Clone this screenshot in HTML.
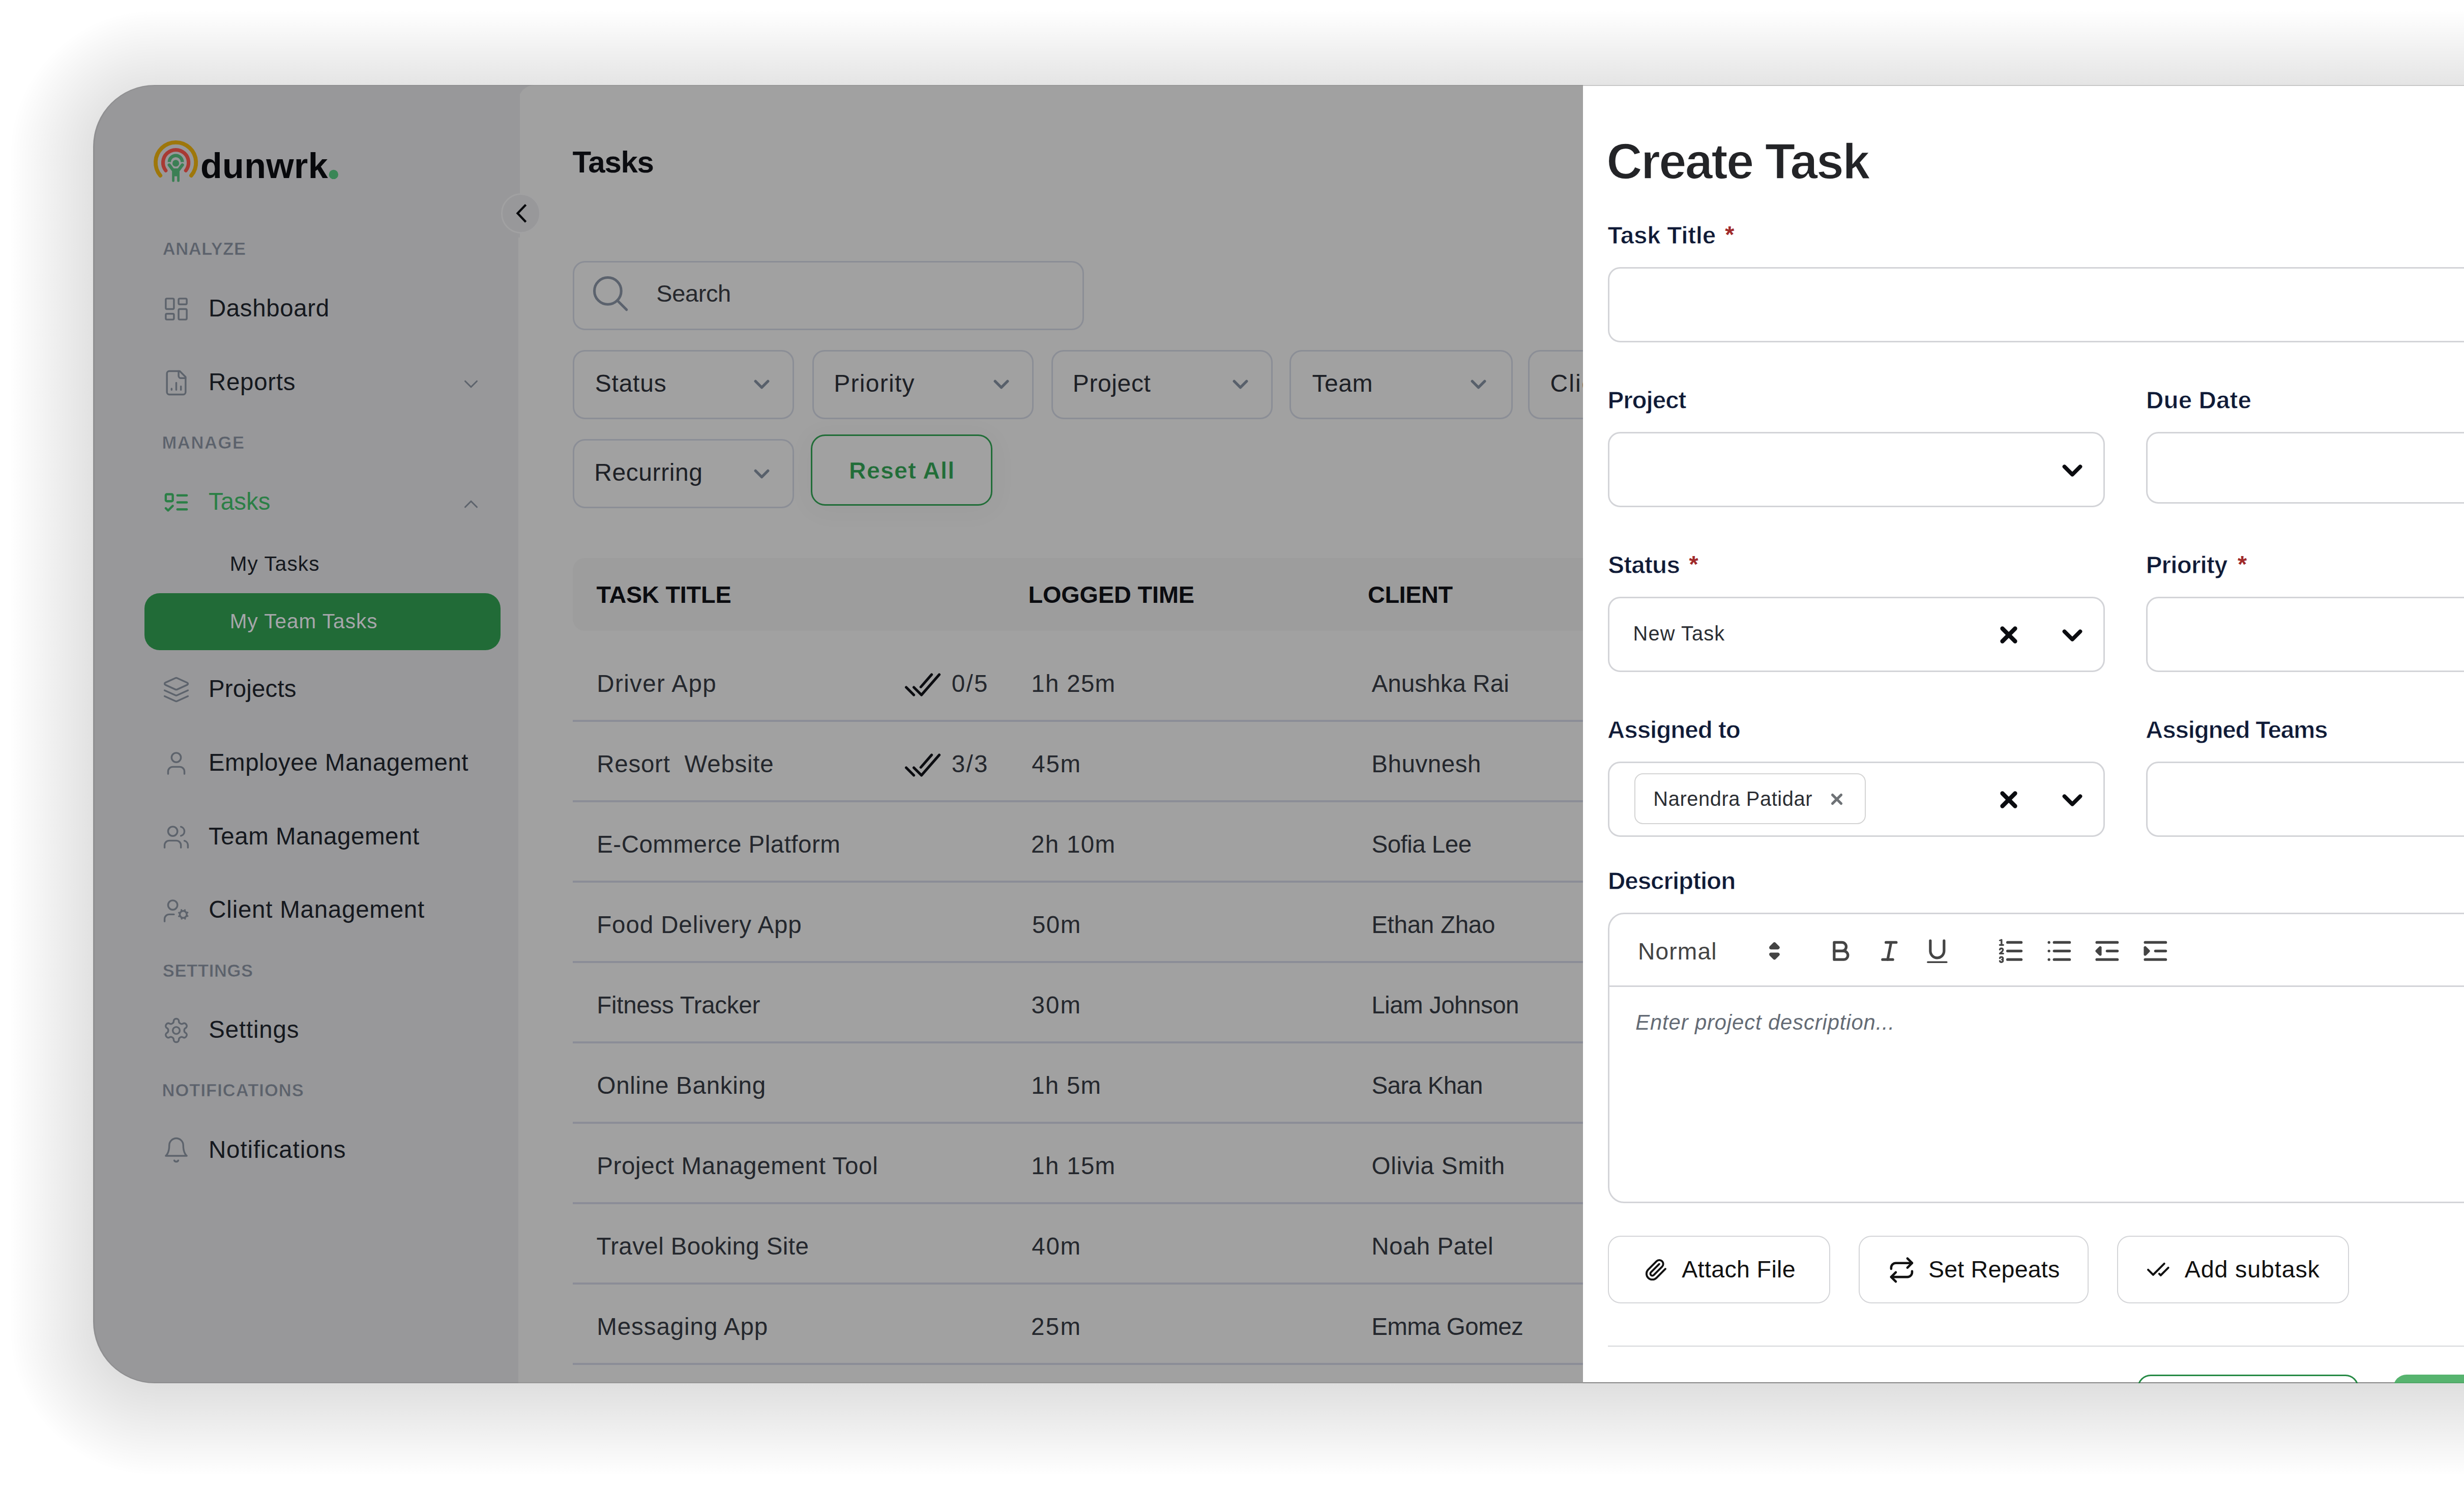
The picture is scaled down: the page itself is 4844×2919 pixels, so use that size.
<!DOCTYPE html><html lang="en"><head><meta charset="utf-8"><title>dunwrk - Create Task</title>
<style>
html,body{margin:0;padding:0;background:#fff;}
body{width:4844px;height:2919px;position:relative;overflow:hidden;font-family:"Liberation Sans",sans-serif;}
.b{position:absolute;box-sizing:border-box;}
.t{position:absolute;white-space:nowrap;line-height:1;}
.i{position:absolute;overflow:visible;}
#win{position:absolute;left:183px;top:166.5px;width:4900px;height:2552px;border-radius:121px 0 0 121px;background:#98989a;}
#clip{position:absolute;left:183px;top:166.5px;width:4661px;height:2552px;border-radius:121px 0 0 121px;overflow:hidden;}
#page{position:absolute;left:-183px;top:-166.5px;width:4844px;height:2919px;}
</style></head><body>
<div class="b " style="left:18.0px;top:304.5px;width:330.0px;height:2310.0px;background:linear-gradient(to right,rgba(0,0,0,0.0000),rgba(0,0,0,0.2300));"></div>
<div class="b " style="left:304.0px;top:18.5px;width:4540.0px;height:330.0px;background:linear-gradient(to bottom,rgba(0,0,0,0.0000),rgba(0,0,0,0.2300));"></div>
<div class="b " style="left:304.0px;top:2570.5px;width:4540.0px;height:330.0px;background:linear-gradient(to top,rgba(0,0,0,0.0000),rgba(0,0,0,0.2300));"></div>
<div class="b " style="left:18.0px;top:18.5px;width:286.0px;height:286.0px;background:radial-gradient(circle at 100% 100%,rgba(0,0,0,0.1993) 0px,rgba(0,0,0,0.1150) 121px,rgba(0,0,0,0.0000) 286px);"></div>
<div class="b " style="left:18.0px;top:2614.5px;width:286.0px;height:286.0px;background:radial-gradient(circle at 100% 0%,rgba(0,0,0,0.1993) 0px,rgba(0,0,0,0.1150) 121px,rgba(0,0,0,0.0000) 286px);"></div>
<div id="win"></div><div id="clip"><div id="page">
<div class="b " style="left:1019.2px;top:166.5px;width:2097.3px;height:2557.0px;background:#a1a1a1;border-radius:32px 0 0 0;"></div>
<svg class="i" style="left:290px;top:265px" width="400" height="110" viewBox="290 265 400 110" fill="none">
<path d="M315.2 345.1 A39.7 39.7 0 1 1 376 345.1" stroke="#9e770b" stroke-width="7.8" stroke-linecap="round"/>
<path d="M325.8 335.1 A25.1 25.1 0 1 1 365.4 335.1" stroke="#a83a33" stroke-width="7.2" stroke-linecap="round"/>
<path d="M332.8 318.6 A12.8 12.8 0 0 1 358.4 318.6" stroke="#3b7f54" stroke-width="6.4" stroke-linecap="butt"/>
<circle cx="345.6" cy="320.9" r="6.6" fill="#3b7f54"/>
<path d="M332.6 324.2 L340 334 M358.6 324.2 L351.2 334" stroke="#3b7f54" stroke-width="6.2" stroke-linecap="round"/>
<path d="M338.2 331 L353 331 L353 355 Q353 357.6 350.6 357.6 Q348.2 357.6 348.2 355 L348.2 346.5 L343 346.5 L343 355 Q343 357.6 340.6 357.6 Q338.2 357.6 338.2 355 Z" fill="#3b7f54"/>
<circle cx="655.8" cy="342.9" r="9.2" fill="#3a8656"/>
</svg>
<div class="t " style="left:394.0px;top:291.3px;font-size:70.0px;color:#08090c;font-weight:700;letter-spacing:0.34px;">dunwrk</div>
<div class="t " style="left:319.8px;top:472.4px;font-size:34.6px;color:#5b616b;font-weight:700;letter-spacing:0.51px;-webkit-text-stroke:0.6px #98989a;">ANALYZE</div>
<div class="t " style="left:409.9px;top:581.5px;font-size:47.5px;color:#15181e;letter-spacing:0.62px;">Dashboard</div>
<svg class="i" style="left:319.2px;top:580.1px" width="55.0" height="55.0" viewBox="0 0 24 24" fill="none" stroke="#5d636c" stroke-width="1.5" stroke-linecap="round" stroke-linejoin="round" ><rect width="7" height="9" x="3" y="3" rx="1"/><rect width="7" height="5" x="14" y="3" rx="1"/><rect width="7" height="9" x="14" y="12" rx="1"/><rect width="7" height="5" x="3" y="16" rx="1"/></svg>
<div class="t " style="left:409.9px;top:727.2px;font-size:47.5px;color:#15181e;letter-spacing:0.72px;">Reports</div>
<svg class="i" style="left:319.2px;top:724.5px" width="55.0" height="55.0" viewBox="0 0 24 24" fill="none" stroke="#5d636c" stroke-width="1.5" stroke-linecap="round" stroke-linejoin="round" ><path d="M15 2H6a2 2 0 0 0-2 2v16a2 2 0 0 0 2 2h12a2 2 0 0 0 2-2V7Z"/><path d="M14 2v4a2 2 0 0 0 2 2h4"/><path d="M8 18v-1"/><path d="M12 18v-6"/><path d="M16 18v-3"/></svg>
<svg class="i" style="left:902.5px;top:732.0px" width="46.0" height="46.0" viewBox="0 0 24 24" fill="none" stroke="#5d636c" stroke-width="1.6" stroke-linecap="round" stroke-linejoin="round" ><path d="m6 9 6 6 6-6"/></svg>
<div class="t " style="left:318.5px;top:853.0px;font-size:34.6px;color:#5b616b;font-weight:700;letter-spacing:1.57px;-webkit-text-stroke:0.6px #98989a;">MANAGE</div>
<div class="t " style="left:409.9px;top:961.8px;font-size:47.5px;color:#2b7f46;letter-spacing:0.04px;">Tasks</div>
<svg class="i" style="left:319.2px;top:959.8px" width="55.0" height="55.0" viewBox="0 0 24 24" fill="none" stroke="#2b7f46" stroke-width="1.9" stroke-linecap="round" stroke-linejoin="round" ><rect x="3" y="5" width="6" height="6" rx="1"/><path d="m3 17 2 2 4-4"/><path d="M13 6h8"/><path d="M13 12h8"/><path d="M13 18h8"/></svg>
<svg class="i" style="left:902.5px;top:968.0px" width="46.0" height="46.0" viewBox="0 0 24 24" fill="none" stroke="#5d636c" stroke-width="1.6" stroke-linecap="round" stroke-linejoin="round" ><path d="m18 15-6-6-6 6"/></svg>
<div class="t " style="left:451.8px;top:1088.3px;font-size:40.5px;color:#15181e;letter-spacing:1.08px;">My Tasks</div>
<div class="b " style="left:283.5px;top:1165.5px;width:700.3px;height:112.1px;background:#216b37;border-radius:30px;"></div>
<div class="t " style="left:451.8px;top:1200.7px;font-size:40.5px;color:#a6a6aa;letter-spacing:1.00px;">My Team Tasks</div>
<div class="t " style="left:409.9px;top:1329.5px;font-size:47.5px;color:#15181e;letter-spacing:0.15px;">Projects</div>
<svg class="i" style="left:319.2px;top:1327.5px" width="55.0" height="55.0" viewBox="0 0 24 24" fill="none" stroke="#5d636c" stroke-width="1.5" stroke-linecap="round" stroke-linejoin="round" ><path d="m12.83 2.18a2 2 0 0 0-1.66 0L2.6 6.08a1 1 0 0 0 0 1.83l8.58 3.91a2 2 0 0 0 1.66 0l8.58-3.9a1 1 0 0 0 0-1.83Z"/><path d="m22 17.65-9.17 4.16a2 2 0 0 1-1.66 0L2 17.65"/><path d="m22 12.65-9.17 4.16a2 2 0 0 1-1.66 0L2 12.65"/></svg>
<div class="t " style="left:409.9px;top:1474.5px;font-size:47.5px;color:#15181e;letter-spacing:0.50px;">Employee Management</div>
<svg class="i" style="left:319.2px;top:1473.0px" width="55.0" height="55.0" viewBox="0 0 24 24" fill="none" stroke="#5d636c" stroke-width="1.5" stroke-linecap="round" stroke-linejoin="round" ><path d="M19 21v-2a4 4 0 0 0-4-4H9a4 4 0 0 0-4 4v2"/><circle cx="12" cy="7" r="4"/></svg>
<div class="t " style="left:409.9px;top:1619.5px;font-size:47.5px;color:#15181e;letter-spacing:0.55px;">Team Management</div>
<svg class="i" style="left:319.2px;top:1618.0px" width="55.0" height="55.0" viewBox="0 0 24 24" fill="none" stroke="#5d636c" stroke-width="1.5" stroke-linecap="round" stroke-linejoin="round" ><path d="M16 21v-2a4 4 0 0 0-4-4H6a4 4 0 0 0-4 4v2"/><circle cx="9" cy="7" r="4"/><path d="M22 21v-2a4 4 0 0 0-3-3.87"/><path d="M16 3.13a4 4 0 0 1 0 7.75"/></svg>
<div class="t " style="left:410.3px;top:1764.3px;font-size:47.5px;color:#15181e;letter-spacing:0.75px;">Client Management</div>
<svg class="i" style="left:319.2px;top:1762.5px" width="55.0" height="55.0" viewBox="0 0 24 24" fill="none" stroke="#5d636c" stroke-width="1.5" stroke-linecap="round" stroke-linejoin="round" ><circle cx="18" cy="15" r="3"/><circle cx="9" cy="7" r="4"/><path d="M10 15H6a4 4 0 0 0-4 4v2"/><path d="m21.7 16.4-.9-.3"/><path d="m15.2 13.9-.9-.3"/><path d="m16.6 18.7.3-.9"/><path d="m19.1 12.2.3-.9"/><path d="m19.6 18.7-.4-1"/><path d="m16.8 12.3-.4-1"/><path d="m14.3 16.6 1-.4"/><path d="m20.7 13.8 1-.4"/></svg>
<div class="t " style="left:319.7px;top:1891.0px;font-size:34.6px;color:#5b616b;font-weight:700;letter-spacing:0.65px;-webkit-text-stroke:0.6px #98989a;">SETTINGS</div>
<div class="t " style="left:410.2px;top:2000.2px;font-size:47.5px;color:#15181e;letter-spacing:0.82px;">Settings</div>
<svg class="i" style="left:319.2px;top:1997.5px" width="55.0" height="55.0" viewBox="0 0 24 24" fill="none" stroke="#5d636c" stroke-width="1.5" stroke-linecap="round" stroke-linejoin="round" ><path d="M12.22 2h-.44a2 2 0 0 0-2 2v.18a2 2 0 0 1-1 1.73l-.43.25a2 2 0 0 1-2 0l-.15-.08a2 2 0 0 0-2.73.73l-.22.38a2 2 0 0 0 .73 2.73l.15.1a2 2 0 0 1 1 1.72v.51a2 2 0 0 1-1 1.74l-.15.09a2 2 0 0 0-.73 2.73l.22.38a2 2 0 0 0 2.73.73l.15-.08a2 2 0 0 1 2 0l.43.25a2 2 0 0 1 1 1.73V20a2 2 0 0 0 2 2h.44a2 2 0 0 0 2-2v-.18a2 2 0 0 1 1-1.73l.43-.25a2 2 0 0 1 2 0l.15.08a2 2 0 0 0 2.73-.73l.22-.39a2 2 0 0 0-.73-2.73l-.15-.08a2 2 0 0 1-1-1.74v-.5a2 2 0 0 1 1-1.74l.15-.09a2 2 0 0 0 .73-2.73l-.22-.38a2 2 0 0 0-2.73-.73l-.15.08a2 2 0 0 1-2 0l-.43-.25a2 2 0 0 1-1-1.73V4a2 2 0 0 0-2-2z"/><circle cx="12" cy="12" r="3"/></svg>
<div class="t " style="left:318.5px;top:2126.0px;font-size:34.6px;color:#5b616b;font-weight:700;letter-spacing:1.00px;-webkit-text-stroke:0.6px #98989a;">NOTIFICATIONS</div>
<div class="t " style="left:409.9px;top:2235.5px;font-size:47.5px;color:#15181e;letter-spacing:0.91px;">Notifications</div>
<svg class="i" style="left:319.2px;top:2232.5px" width="55.0" height="55.0" viewBox="0 0 24 24" fill="none" stroke="#5d636c" stroke-width="1.5" stroke-linecap="round" stroke-linejoin="round" ><path d="M6 8a6 6 0 0 1 12 0c0 7 3 9 3 9H3s3-2 3-9"/><path d="M10.3 21a1.94 1.94 0 0 0 3.4 0"/></svg>
<div class="b " style="left:1019.0px;top:166.5px;width:2.9px;height:300.5px;background:#98989a;"></div>
<div class="b " style="left:984.7px;top:379.9px;width:78.8px;height:78.8px;background:#98989a;border:3.8px solid #a1a1a2;border-radius:50%;"></div>
<svg class="i" style="left:1000px;top:395px" width="50" height="50" viewBox="1000 395 50 50" fill="none" stroke="#08090c" stroke-width="4.4" stroke-linecap="square" stroke-linejoin="miter"><polyline points="1032.2,404 1017.6,419.3 1032.2,434.6"/></svg>
<div class="t " style="left:1125.4px;top:289.2px;font-size:60.0px;color:#0b0c10;font-weight:700;letter-spacing:-1.29px;">Tasks</div>
<div class="b " style="left:1125.6px;top:512.5px;width:1005.4px;height:136.3px;border:3.3px solid #8b8e96;border-radius:24px;"></div>
<svg class="i" style="left:1158.1px;top:534.5px" width="84.3" height="84.3" viewBox="0 0 24 24" fill="none" stroke="#5b626d" stroke-width="1.45" stroke-linecap="round" stroke-linejoin="round" ><circle cx="10.5" cy="10.5" r="7.5"/><path d="m21 21-5.2-5.2"/></svg>
<div class="t " style="left:1290.3px;top:552.5px;font-size:47.0px;color:#26282d;letter-spacing:-0.42px;">Search</div>
<div class="b " style="left:1126.0px;top:688.0px;width:434.5px;height:135.5px;border:3px solid #8b8e96;border-radius:24px;"></div>
<div class="t " style="left:1169.8px;top:729.6px;font-size:48.0px;color:#1d2026;letter-spacing:0.75px;">Status</div>
<svg class="i" style="left:1473.0px;top:731.3px" width="49.0" height="49.0" viewBox="0 0 24 24" fill="none" stroke="#58606b" stroke-width="2.6" stroke-linecap="round" stroke-linejoin="round" ><path d="m6 9 6 6 6-6"/></svg>
<div class="b " style="left:1597.0px;top:688.0px;width:434.5px;height:135.5px;border:3px solid #8b8e96;border-radius:24px;"></div>
<div class="t " style="left:1639.2px;top:729.6px;font-size:48.0px;color:#1d2026;letter-spacing:1.28px;">Priority</div>
<svg class="i" style="left:1944.0px;top:731.3px" width="49.0" height="49.0" viewBox="0 0 24 24" fill="none" stroke="#58606b" stroke-width="2.6" stroke-linecap="round" stroke-linejoin="round" ><path d="m6 9 6 6 6-6"/></svg>
<div class="b " style="left:2066.6px;top:688.0px;width:435.6px;height:135.5px;border:3px solid #8b8e96;border-radius:24px;"></div>
<div class="t " style="left:2108.8px;top:729.6px;font-size:48.0px;color:#1d2026;letter-spacing:0.61px;">Project</div>
<svg class="i" style="left:2413.6px;top:731.3px" width="49.0" height="49.0" viewBox="0 0 24 24" fill="none" stroke="#58606b" stroke-width="2.6" stroke-linecap="round" stroke-linejoin="round" ><path d="m6 9 6 6 6-6"/></svg>
<div class="b " style="left:2534.5px;top:688.0px;width:439.0px;height:135.5px;border:3px solid #8b8e96;border-radius:24px;"></div>
<div class="t " style="left:2579.5px;top:729.6px;font-size:48.0px;color:#1d2026;letter-spacing:0.51px;">Team</div>
<svg class="i" style="left:2881.5px;top:731.3px" width="49.0" height="49.0" viewBox="0 0 24 24" fill="none" stroke="#58606b" stroke-width="2.6" stroke-linecap="round" stroke-linejoin="round" ><path d="m6 9 6 6 6-6"/></svg>
<div class="b " style="left:3004.0px;top:688.0px;width:439.0px;height:135.5px;border:3px solid #8b8e96;border-radius:24px;"></div>
<div class="t " style="left:3047.6px;top:729.6px;font-size:48.0px;color:#1d2026;letter-spacing:1.98px;">Client</div>
<svg class="i" style="left:3351.0px;top:731.3px" width="49.0" height="49.0" viewBox="0 0 24 24" fill="none" stroke="#58606b" stroke-width="2.6" stroke-linecap="round" stroke-linejoin="round" ><path d="m6 9 6 6 6-6"/></svg>
<div class="b " style="left:1126.0px;top:863.4px;width:434.5px;height:135.5px;border:3px solid #8b8e96;border-radius:24px;"></div>
<div class="t " style="left:1168.2px;top:905.0px;font-size:48.0px;color:#1d2026;letter-spacing:0.59px;">Recurring</div>
<svg class="i" style="left:1473.0px;top:906.7px" width="49.0" height="49.0" viewBox="0 0 24 24" fill="none" stroke="#58606b" stroke-width="2.6" stroke-linecap="round" stroke-linejoin="round" ><path d="m6 9 6 6 6-6"/></svg>
<div class="b " style="left:1593.9px;top:853.6px;width:357.5px;height:140.7px;border:3.6px solid #216d38;border-radius:28px;box-shadow:0 6px 50px 8px rgba(0,0,0,0.03);"></div>
<div class="t " style="left:1669.1px;top:901.6px;font-size:46.6px;color:#216d38;font-weight:700;letter-spacing:1.17px;-webkit-text-stroke:0.5px #a1a1a1;">Reset All</div>
<div class="b " style="left:1125.6px;top:1096.5px;width:2025.9px;height:143.0px;background:#9d9d9d;border-radius:24px;"></div>
<div class="t " style="left:1172.5px;top:1145.8px;font-size:46.8px;color:#0b0c10;font-weight:700;letter-spacing:-0.20px;">TASK TITLE</div>
<div class="t " style="left:2021.5px;top:1145.8px;font-size:46.8px;color:#0b0c10;font-weight:700;letter-spacing:-0.10px;">LOGGED TIME</div>
<div class="t " style="left:2689.0px;top:1145.8px;font-size:46.8px;color:#0b0c10;font-weight:700;letter-spacing:-0.39px;">CLIENT</div>
<div class="t " style="left:1173.2px;top:1320.3px;font-size:47.5px;color:#24272d;letter-spacing:1.41px;">Driver App</div>
<svg class="i" style="left:1774.4px;top:1306.0px" width="80" height="80" viewBox="0 0 512 512" fill="none" stroke="#0b0c10" stroke-width="33" stroke-linecap="round" stroke-linejoin="round"><path d="M464 128L240 384l-96-96M144 384l-96-96M368 128L232 284"/></svg>
<div class="t " style="left:1870.7px;top:1320.3px;font-size:47.5px;color:#24272d;letter-spacing:2.33px;">0/5</div>
<div class="t " style="left:2027.2px;top:1320.3px;font-size:47.5px;color:#24272d;letter-spacing:1.31px;">1h 25m</div>
<div class="t " style="left:2696.5px;top:1320.3px;font-size:47.5px;color:#24272d;letter-spacing:0.09px;">Anushka Rai</div>
<div class="b " style="left:1126.0px;top:1415.4px;width:1990.5px;height:3.6px;background:#8b8d97;"></div>
<div class="t " style="left:1173.2px;top:1478.3px;font-size:47.5px;color:#24272d;letter-spacing:0.75px;">Resort &nbsp;Website</div>
<svg class="i" style="left:1774.4px;top:1464.0px" width="80" height="80" viewBox="0 0 512 512" fill="none" stroke="#0b0c10" stroke-width="33" stroke-linecap="round" stroke-linejoin="round"><path d="M464 128L240 384l-96-96M144 384l-96-96M368 128L232 284"/></svg>
<div class="t " style="left:1870.7px;top:1478.3px;font-size:47.5px;color:#24272d;letter-spacing:2.39px;">3/3</div>
<div class="t " style="left:2028.2px;top:1478.3px;font-size:47.5px;color:#24272d;letter-spacing:1.78px;">45m</div>
<div class="t " style="left:2696.2px;top:1478.3px;font-size:47.5px;color:#24272d;letter-spacing:0.57px;">Bhuvnesh</div>
<div class="b " style="left:1126.0px;top:1573.4px;width:1990.5px;height:3.6px;background:#8b8d97;"></div>
<div class="t " style="left:1173.2px;top:1636.3px;font-size:47.5px;color:#24272d;letter-spacing:0.49px;">E-Commerce Platform</div>
<div class="t " style="left:2026.9px;top:1636.3px;font-size:47.5px;color:#24272d;letter-spacing:1.37px;">2h 10m</div>
<div class="t " style="left:2696.5px;top:1636.3px;font-size:47.5px;color:#24272d;letter-spacing:-0.52px;">Sofia Lee</div>
<div class="b " style="left:1126.0px;top:1731.4px;width:1990.5px;height:3.6px;background:#8b8d97;"></div>
<div class="t " style="left:1173.2px;top:1794.3px;font-size:47.5px;color:#24272d;letter-spacing:0.90px;">Food Delivery App</div>
<div class="t " style="left:2028.9px;top:1794.3px;font-size:47.5px;color:#24272d;letter-spacing:1.45px;">50m</div>
<div class="t " style="left:2696.2px;top:1794.3px;font-size:47.5px;color:#24272d;letter-spacing:-0.26px;">Ethan Zhao</div>
<div class="b " style="left:1126.0px;top:1889.4px;width:1990.5px;height:3.6px;background:#8b8d97;"></div>
<div class="t " style="left:1173.2px;top:1952.3px;font-size:47.5px;color:#24272d;letter-spacing:-0.25px;">Fitness Tracker</div>
<div class="t " style="left:2027.5px;top:1952.3px;font-size:47.5px;color:#24272d;letter-spacing:2.14px;">30m</div>
<div class="t " style="left:2696.2px;top:1952.3px;font-size:47.5px;color:#24272d;letter-spacing:-0.49px;">Liam Johnson</div>
<div class="b " style="left:1126.0px;top:2047.4px;width:1990.5px;height:3.6px;background:#8b8d97;"></div>
<div class="t " style="left:1173.5px;top:2110.3px;font-size:47.5px;color:#24272d;letter-spacing:0.73px;">Online Banking</div>
<div class="t " style="left:2027.2px;top:2110.3px;font-size:47.5px;color:#24272d;letter-spacing:1.22px;">1h 5m</div>
<div class="t " style="left:2696.5px;top:2110.3px;font-size:47.5px;color:#24272d;letter-spacing:-0.68px;">Sara Khan</div>
<div class="b " style="left:1126.0px;top:2205.4px;width:1990.5px;height:3.6px;background:#8b8d97;"></div>
<div class="t " style="left:1173.2px;top:2268.3px;font-size:47.5px;color:#24272d;letter-spacing:0.67px;">Project Management Tool</div>
<div class="t " style="left:2027.2px;top:2268.3px;font-size:47.5px;color:#24272d;letter-spacing:1.31px;">1h 15m</div>
<div class="t " style="left:2696.5px;top:2268.3px;font-size:47.5px;color:#24272d;letter-spacing:0.75px;">Olivia Smith</div>
<div class="b " style="left:1126.0px;top:2363.4px;width:1990.5px;height:3.6px;background:#8b8d97;"></div>
<div class="t " style="left:1172.5px;top:2426.3px;font-size:47.5px;color:#24272d;letter-spacing:0.40px;">Travel Booking Site</div>
<div class="t " style="left:2028.2px;top:2426.3px;font-size:47.5px;color:#24272d;letter-spacing:1.78px;">40m</div>
<div class="t " style="left:2696.2px;top:2426.3px;font-size:47.5px;color:#24272d;letter-spacing:0.49px;">Noah Patel</div>
<div class="b " style="left:1126.0px;top:2521.4px;width:1990.5px;height:3.6px;background:#8b8d97;"></div>
<div class="t " style="left:1173.2px;top:2584.3px;font-size:47.5px;color:#24272d;letter-spacing:0.93px;">Messaging App</div>
<div class="t " style="left:2026.9px;top:2584.3px;font-size:47.5px;color:#24272d;letter-spacing:2.44px;">25m</div>
<div class="t " style="left:2696.2px;top:2584.3px;font-size:47.5px;color:#24272d;letter-spacing:-0.55px;">Emma Gomez</div>
<div class="b " style="left:1126.0px;top:2679.4px;width:1990.5px;height:3.6px;background:#8b8d97;"></div>
<div class="b " style="left:3111.5px;top:166.5px;width:1788.5px;height:2552.0px;background:#fff;border-top:2px solid #d2d2d2;border-bottom:2.5px solid #919191;"></div>
<div class="t " style="left:3158.3px;top:268.8px;font-size:97.5px;color:#232427;font-weight:700;letter-spacing:-2.73px;-webkit-text-stroke:1.6px #fff;">Create Task</div>
<div class="t " style="left:3160.6px;top:438.7px;font-size:47.6px;color:#0f1a36;font-weight:700;letter-spacing:-0.28px;-webkit-text-stroke:0.8px #fff;">Task Title</div>
<div class="t " style="left:3391.2px;top:438.2px;font-size:46.5px;color:#a02a2a;font-weight:700;">*</div>
<div class="b " style="left:3160.7px;top:524.5px;width:1739.3px;height:148.1px;border:3.2px solid #d3d4d8;border-radius:24px;background:#fff;"></div>
<div class="t " style="left:3160.5px;top:762.6px;font-size:47.6px;color:#0f1a36;font-weight:700;letter-spacing:-1.08px;-webkit-text-stroke:0.8px #fff;">Project</div>
<div class="b " style="left:3160.7px;top:848.5px;width:977.0px;height:148.1px;border:3.2px solid #d3d4d8;border-radius:24px;background:#fff;"></div>
<svg class="i" style="left:4042.6px;top:893.7px" width="62.0" height="62.0" viewBox="0 0 24 24" fill="none" stroke="#0b0c10" stroke-width="3" stroke-linecap="round" stroke-linejoin="round" ><path d="m6 9 6 6 6-6"/></svg>
<div class="t " style="left:4219.1px;top:762.6px;font-size:47.6px;color:#0f1a36;font-weight:700;letter-spacing:0.09px;-webkit-text-stroke:0.8px #fff;">Due Date</div>
<div class="b " style="left:4219.2px;top:848.5px;width:680.8px;height:141.4px;border:3.2px solid #d3d4d8;border-radius:24px;background:#fff;"></div>
<div class="t " style="left:3161.3px;top:1086.8px;font-size:47.6px;color:#0f1a36;font-weight:700;letter-spacing:-0.78px;-webkit-text-stroke:0.8px #fff;">Status</div>
<div class="t " style="left:3320.5px;top:1086.3px;font-size:46.5px;color:#a02a2a;font-weight:700;">*</div>
<div class="b " style="left:3160.7px;top:1172.7px;width:977.0px;height:148.3px;border:3.2px solid #d3d4d8;border-radius:24px;background:#fff;"></div>
<svg class="i" style="left:4042.6px;top:1217.9px" width="62.0" height="62.0" viewBox="0 0 24 24" fill="none" stroke="#0b0c10" stroke-width="3" stroke-linecap="round" stroke-linejoin="round" ><path d="m6 9 6 6 6-6"/></svg>
<svg class="i" style="left:3924.0px;top:1222.7px" width="50.0" height="50.0" viewBox="0 0 24 24" fill="none" stroke="#0b0c10" stroke-width="4" stroke-linecap="round" stroke-linejoin="round" ><path d="M18 6 6 18"/><path d="m6 6 12 12"/></svg>
<div class="t " style="left:3210.6px;top:1226.4px;font-size:39.8px;color:#2b2e33;letter-spacing:1.12px;">New Task</div>
<div class="t " style="left:4218.7px;top:1086.8px;font-size:47.6px;color:#0f1a36;font-weight:700;letter-spacing:-0.83px;-webkit-text-stroke:0.8px #fff;">Priority</div>
<div class="t " style="left:4398.9px;top:1086.3px;font-size:46.5px;color:#a02a2a;font-weight:700;">*</div>
<div class="b " style="left:4219.2px;top:1172.7px;width:680.8px;height:148.3px;border:3.2px solid #d3d4d8;border-radius:24px;background:#fff;"></div>
<div class="t " style="left:3159.9px;top:1411.0px;font-size:47.6px;color:#0f1a36;font-weight:700;letter-spacing:-1.05px;-webkit-text-stroke:0.8px #fff;">Assigned to</div>
<div class="b " style="left:3160.7px;top:1496.9px;width:977.0px;height:148.3px;border:3.2px solid #d3d4d8;border-radius:24px;background:#fff;"></div>
<svg class="i" style="left:4042.6px;top:1542.1px" width="62.0" height="62.0" viewBox="0 0 24 24" fill="none" stroke="#0b0c10" stroke-width="3" stroke-linecap="round" stroke-linejoin="round" ><path d="m6 9 6 6 6-6"/></svg>
<svg class="i" style="left:3924.0px;top:1546.9px" width="50.0" height="50.0" viewBox="0 0 24 24" fill="none" stroke="#0b0c10" stroke-width="4" stroke-linecap="round" stroke-linejoin="round" ><path d="M18 6 6 18"/><path d="m6 6 12 12"/></svg>
<div class="b " style="left:3212.5px;top:1520.3px;width:455.7px;height:100.0px;border:2.7px solid #d4d4d4;border-radius:17px;"></div>
<div class="t " style="left:3250.3px;top:1550.9px;font-size:39.8px;color:#2b2e33;letter-spacing:0.61px;">Narendra Patidar</div>
<svg class="i" style="left:3594.3px;top:1554.0px" width="34.0" height="34.0" viewBox="0 0 24 24" fill="none" stroke="#6e7276" stroke-width="3.7" stroke-linecap="round" stroke-linejoin="round" ><path d="M18 6 6 18"/><path d="m6 6 12 12"/></svg>
<div class="t " style="left:4218.1px;top:1411.0px;font-size:47.6px;color:#0f1a36;font-weight:700;letter-spacing:-1.25px;-webkit-text-stroke:0.8px #fff;">Assigned Teams</div>
<div class="b " style="left:4219.2px;top:1496.9px;width:680.8px;height:148.3px;border:3.2px solid #d3d4d8;border-radius:24px;background:#fff;"></div>
<div class="t " style="left:3160.9px;top:1708.3px;font-size:47.6px;color:#0f1a36;font-weight:700;letter-spacing:-1.05px;-webkit-text-stroke:0.8px #fff;">Description</div>
<div class="b " style="left:3160.7px;top:1793.6px;width:1739.3px;height:571.3px;border:3.2px solid #d3d4d8;border-radius:32px;background:#fff;"></div>
<div class="b " style="left:3161.7px;top:1936.7px;width:1738.3px;height:3.0px;background:#d3d4d8;"></div>
<div class="t " style="left:3219.9px;top:1847.3px;font-size:46.2px;color:#444;letter-spacing:1.16px;">Normal</div>
<svg class="i" style="left:3457.6px;top:1839.4px" width="60.7" height="60.7" viewBox="0 0 18 18" fill="none" stroke="#444" stroke-width="1.55" stroke-linecap="round" stroke-linejoin="round"><polygon points="7 11 9 13 11 11 7 11" fill="#444" stroke-width="2.1"/><polygon points="7 7 9 5 11 7 7 7" fill="#444" stroke-width="2.1"/></svg>
<svg class="i" style="left:3589.2px;top:1839.0px" width="60.7" height="60.7" viewBox="0 0 18 18" fill="none" stroke="#444" stroke-width="1.55" stroke-linecap="round" stroke-linejoin="round"><path d="M5,4H9.5A2.5,2.5,0,0,1,12,6.5v0A2.5,2.5,0,0,1,9.5,9H5A0,0,0,0,1,5,9V4A0,0,0,0,1,5,4Z"/><path d="M5,9h5.5A2.5,2.5,0,0,1,13,11.5v0A2.5,2.5,0,0,1,10.5,14H5a0,0,0,0,1,0,0V9A0,0,0,0,1,5,9Z"/></svg>
<svg class="i" style="left:3683.7px;top:1839.0px" width="60.7" height="60.7" viewBox="0 0 18 18" fill="none" stroke="#444" stroke-width="1.55" stroke-linecap="round" stroke-linejoin="round"><line x1="7" x2="13" y1="4" y2="4"/><line x1="5" x2="11" y1="14" y2="14"/><line x1="8" x2="10" y1="14" y2="4"/></svg>
<svg class="i" style="left:3778.2px;top:1839.0px" width="60.7" height="60.7" viewBox="0 0 18 18" fill="none" stroke="#444" stroke-width="1.55" stroke-linecap="round" stroke-linejoin="round"><path d="M5,3V9a4.012,4.012,0,0,0,4,4H9a4.012,4.012,0,0,0,4-4V3"/><rect fill="#444" stroke="none" height="1" rx="0.5" ry="0.5" width="12" x="3" y="15"/></svg>
<svg class="i" style="left:3923.2px;top:1839.0px" width="60.7" height="60.7" viewBox="0 0 18 18" fill="none" stroke="#444" stroke-width="1.55" stroke-linecap="round" stroke-linejoin="round"><line x1="7" x2="15" y1="4" y2="4"/><line x1="7" x2="15" y1="9" y2="9"/><line x1="7" x2="15" y1="14" y2="14"/><line x1="2.5" x2="4.5" y1="5.5" y2="5.5" stroke-width="1"/><path fill="#444" stroke="none" d="M3.5,6A0.5,0.5,0,0,1,3,5.5V3.085l-0.276.138A0.5,0.5,0,0,1,2.053,3c-0.124-.247-0.023-0.324.224-0.447l1-.5A0.5,0.5,0,0,1,4,2.5v3A0.5,0.5,0,0,1,3.5,6Z"/><path stroke-width="1" d="M4.5,10.5h-2c0-.234,1.85-1.076,1.85-2.234A0.959,0.959,0,0,0,2.5,8.156"/><path stroke-width="1" d="M2.5,14.846a0.959,0.959,0,0,0,1.85-.109A0.7,0.7,0,0,0,3.75,14a0.688,0.688,0,0,0,.6-0.736,0.959,0.959,0,0,0-1.85-.109"/></svg>
<svg class="i" style="left:4017.7px;top:1839.0px" width="60.7" height="60.7" viewBox="0 0 18 18" fill="none" stroke="#444" stroke-width="1.55" stroke-linecap="round" stroke-linejoin="round"><line x1="6" x2="15" y1="4" y2="4"/><line x1="6" x2="15" y1="9" y2="9"/><line x1="6" x2="15" y1="14" y2="14"/><line x1="3" x2="3" y1="4" y2="4"/><line x1="3" x2="3" y1="9" y2="9"/><line x1="3" x2="3" y1="14" y2="14"/></svg>
<svg class="i" style="left:4112.2px;top:1839.0px" width="60.7" height="60.7" viewBox="0 0 18 18" fill="none" stroke="#444" stroke-width="1.55" stroke-linecap="round" stroke-linejoin="round"><line x1="3" x2="15" y1="14" y2="14"/><line x1="3" x2="15" y1="4" y2="4"/><line x1="9" x2="15" y1="9" y2="9"/><polyline fill="#444" stroke-width="1.6" points="5 7 5 11 3 9 5 7"/></svg>
<svg class="i" style="left:4206.7px;top:1839.0px" width="60.7" height="60.7" viewBox="0 0 18 18" fill="none" stroke="#444" stroke-width="1.55" stroke-linecap="round" stroke-linejoin="round"><line x1="3" x2="15" y1="14" y2="14"/><line x1="3" x2="15" y1="4" y2="4"/><line x1="9" x2="15" y1="9" y2="9"/><polyline fill="#444" stroke-width="1.6" points="3 7 3 11 5 9 3 7"/></svg>
<div class="t " style="left:3215.2px;top:1988.6px;font-size:41.8px;color:#646b75;font-style:italic;letter-spacing:0.87px;">Enter project description...</div>
<div class="b " style="left:3161.2px;top:2429.0px;width:437.2px;height:133.1px;border:2.7px solid #d4d5d8;border-radius:25px;"></div>
<svg class="i" style="left:3232.8px;top:2473.0px" width="46.0" height="46.0" viewBox="0 0 24 24" fill="none" stroke="#111" stroke-width="2" stroke-linecap="round" stroke-linejoin="round" ><path d="m21.44 11.05-9.19 9.19a6 6 0 0 1-8.49-8.49l8.57-8.57A4 4 0 1 1 18 8.84l-8.59 8.57a2 2 0 0 1-2.83-2.83l8.49-8.48"/></svg>
<div class="t " style="left:3306.2px;top:2471.6px;font-size:46.6px;color:#111;letter-spacing:0.34px;">Attach File</div>
<div class="b " style="left:3654.3px;top:2429.0px;width:452.2px;height:133.1px;border:2.7px solid #d4d5d8;border-radius:25px;"></div>
<svg class="i" style="left:3710.5px;top:2468.6px" width="54.8" height="54.8" viewBox="0 0 24 24" fill="none" stroke="#111" stroke-width="2" stroke-linecap="round" stroke-linejoin="round" ><path d="m17 2 4 4-4 4"/><path d="M3 11v-1a4 4 0 0 1 4-4h14"/><path d="m7 22-4-4 4-4"/><path d="M21 13v1a4 4 0 0 1-4 4H3"/></svg>
<div class="t " style="left:3790.9px;top:2471.6px;font-size:46.6px;color:#111;letter-spacing:0.20px;">Set Repeats</div>
<div class="b " style="left:4162.0px;top:2429.0px;width:456.0px;height:133.1px;border:2.7px solid #d4d5d8;border-radius:25px;"></div>
<svg class="i" style="left:4218.6px;top:2472.2px" width="47.7" height="47.7" viewBox="0 0 24 24" fill="none" stroke="#111" stroke-width="2" stroke-linecap="round" stroke-linejoin="round" ><path d="M18 6 7 17l-5-5"/><path d="m22 10-7.5 7.5L13 16"/></svg>
<div class="t " style="left:4294.7px;top:2471.6px;font-size:46.6px;color:#111;letter-spacing:0.88px;">Add subtask</div>
<div class="b " style="left:3161.0px;top:2644.5px;width:1739.0px;height:2.5px;background:#d6d7da;"></div>
<div class="b " style="left:4202.0px;top:2701.5px;width:434.5px;height:140.5px;border:3px solid #268a45;border-radius:26px;"></div>
<div class="b " style="left:4705.0px;top:2701.5px;width:435.0px;height:140.5px;background:#57b46f;border-radius:26px;"></div>
</div></div>
<div style="position:absolute;left:183px;top:166.5px;width:4900px;height:2552px;box-sizing:border-box;border-radius:121px 0 0 121px;border-left:3.5px solid rgba(0,0,0,0.055);border-top:2px solid rgba(0,0,0,0.05);border-bottom:2.5px solid rgba(0,0,0,0.07);pointer-events:none;"></div>
</body></html>
